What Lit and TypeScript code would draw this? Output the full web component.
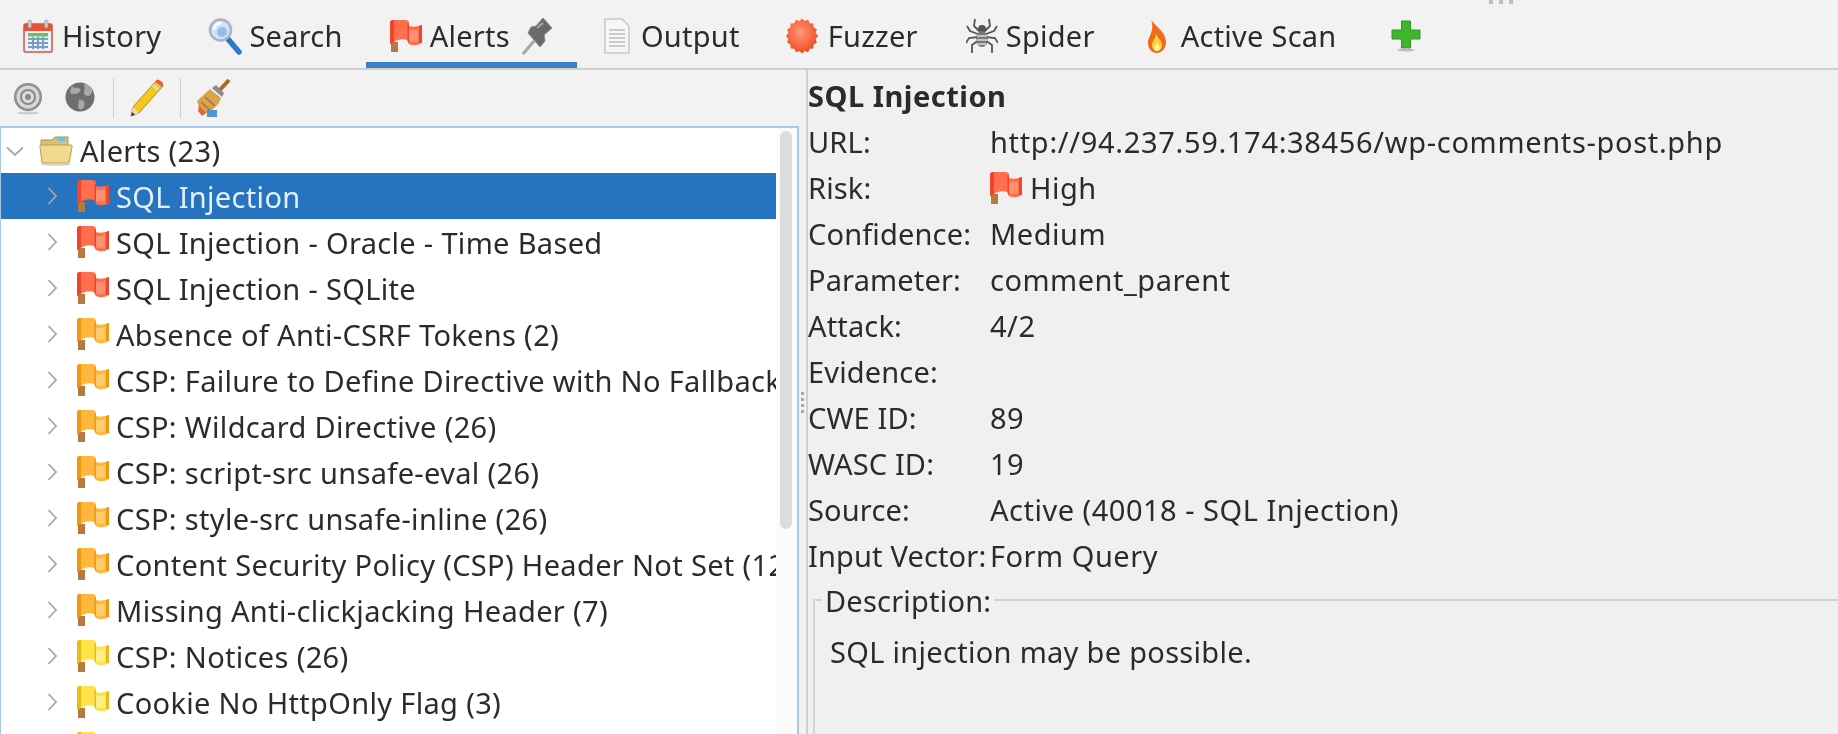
import { LitElement, css, html, svg } from 'lit';
import { customElement } from 'lit/decorators.js';

const RED = ['#ff6f4e', '#f0452a', '#ff9a80'];
const ORANGE = ['#ffb63c', '#f2980f', '#ffd57c'];
const YELLOW = ['#ffe24a', '#e6bd10', '#fff09a'];

// the ZAP flag, a short pole and a blocky two part cloth
const flag = (c: string[], size = 32) =>
  html`<svg class="ico" width=${size} height=${size} viewBox="0 0 32 32">
    <rect x="1" y="22" width="7" height="10" fill="#b47a42" />
    <path d="M0 3 Q0 0 3 0 H15 Q19 0 19 3 V6 Q24 8 32 5 V23 Q25 27 19 24 L17 20 C12 18 6 20 0 24 Z" fill=${c[0]} />
    <path d="M0 3 Q0 0 3 0 H4 V22 L0 24 Z" fill=${c[1]} />
    <path d="M19 10 Q24 11 28 9 V21 Q24 23 19 21 Z" fill=${c[2]} opacity="0.75" />
    <path d="M17.500 3 V20 L19 24 V4 Z M29 6 V23 L32 23 V5 Z" fill=${c[1]} />
  </svg>`;

const calendar = html`<svg class="ico" width="30" height="34" viewBox="0 0 30 34">
  <rect x="1" y="5" width="28" height="28" rx="1.500" fill="#eaf2fa" stroke="#d8523c" stroke-width="1.500" />
  <rect x="1" y="5" width="28" height="7" fill="#e8503a" />
  <rect x="5" y="1" width="3.500" height="8" rx="1.500" fill="#c9c9c9" stroke="#888" stroke-width=".5" />
  <rect x="21.500" y="1" width="3.500" height="8" rx="1.500" fill="#c9c9c9" stroke="#888" stroke-width=".5" />
  <rect x="5" y="14" width="20" height="3.500" fill="#6fc05a" />
  <path d="M5 20h20M5 24h20M5 28h20M10 18v12M15 18v12M20 18v12" stroke="#7d9dc4" stroke-width="2" />
</svg>`;

const magnifier = html`<svg class="ico" width="34" height="38" viewBox="0 0 34 38">
  <path d="M20 22 L31 35" stroke="#2f78c2" stroke-width="5.500" stroke-linecap="round" />
  <circle cx="12.500" cy="13" r="10.500" fill="#cfe4f8" stroke="#a9b4bf" stroke-width="2.500" />
  <path d="M6 13a7 7 0 0 1 7-7" stroke="#fff" stroke-width="2.500" fill="none" />
  <circle cx="14" cy="15" r="5" fill="#8fbdec" />
</svg>`;

const pin = html`<svg class="ico" width="32" height="38" viewBox="0 0 32 38">
  <path d="M1 37 L12 24" stroke="#a8a8a8" stroke-width="3" />
  <path d="M6 16 L18 30 L23 24 L22 18 L30 11 L21 1 L14 9 L9 10 Z" fill="#6a6a6a" stroke="#8a8a8a" />
  <path d="M15 11 L21 6" stroke="#aaa" stroke-width="2" />
</svg>`;

const page = html`<svg class="ico" width="26" height="36" viewBox="0 0 26 36">
  <path d="M1 1 H18 L25 8 V35 H1 Z" fill="#f7f7f7" stroke="#c8c8c8" stroke-width="1.500" />
  <path d="M5 12h16M5 16h16M5 20h16M5 24h16M5 28h16" stroke="#bcbcbc" stroke-width="1.500" />
</svg>`;

const burst = (() => {
  const pts: string[] = [];
  for (let i = 0; i < 32; i++) {
    const r = i % 2 ? 14 : 16;
    const a = (i / 32) * Math.PI * 2;
    pts.push(`${(16 + r * Math.cos(a)).toFixed(1)},${(18 + r * 1.100 * Math.sin(a)).toFixed(1)}`);
  }
  return html`<svg class="ico" width="32" height="36" viewBox="0 0 32 36">
    <defs><radialGradient id="bst" cx=".45" cy=".4" r=".6">
      <stop offset="0" stop-color="#ff9a78" /><stop offset="1" stop-color="#f04a22" />
    </radialGradient></defs>
    <polygon points=${pts.join(' ')} fill="url(#bst)" />
  </svg>`;
})();

const spider = html`<svg class="ico" width="32" height="38" viewBox="0 0 32 38">
  <g stroke="#555" stroke-width="1.800" fill="none">
    <path d="M13 14 L8 9 L9 2 M19 14 L24 9 L23 2" />
    <path d="M12 17 L4 14 L1 9 M20 17 L28 14 L31 9" />
    <path d="M12 20 L3 21 L0 26 M20 20 L29 21 L32 26" />
    <path d="M13 23 L6 28 L6 36 M19 23 L26 28 L26 36" />
  </g>
  <ellipse cx="16" cy="12" rx="4" ry="4" fill="#555" />
  <ellipse cx="16" cy="22" rx="6" ry="8" fill="#777" />
  <path d="M11 19h10M10.500 23h11M12 27h8" stroke="#ddd" stroke-width="1.300" />
</svg>`;

const flame = html`<svg class="ico" width="22" height="36" viewBox="0 0 22 36">
  <path d="M5 1 C7 7 20 13 20 24 C20 31 15 35 11 35 C6 35 2 31 2 25 C2 18 9 14 5 1 Z" fill="#ef6a1e" />
  <path d="M10 15 C11 20 16 22 16 27 C16 31 13 33 11 33 C8 33 6 30 6 27 C6 23 10 20 10 15 Z" fill="#ffd23c" />
  <path d="M11 25 C12 27 13.500 28 13.500 30 C13.500 32 12 33 11 33 C9.500 33 8.500 31.500 8.500 30 C8.500 28 10.500 27 11 25Z" fill="#fff3c0" />
</svg>`;

const plus = html`<svg class="ico" width="30" height="32" viewBox="0 0 30 32">
  <path d="M10.500 1 H19.500 V10 H29 V19 H19.500 V28 H10.500 V19 H1 V10 H10.500 Z" fill="#3fb52c" stroke="#2f9a20" />
  <ellipse cx="15" cy="30" rx="9" ry="1.500" fill="#bbb" />
</svg>`;

const target = html`<svg class="ico" width="30" height="36" viewBox="0 0 30 36">
  <circle cx="15" cy="17" r="14" fill="#8e8e8e" />
  <circle cx="15" cy="17" r="11.500" fill="#d6d6d6" />
  <circle cx="15" cy="17" r="8" fill="#8a8a8a" />
  <circle cx="15" cy="17" r="6" fill="#dcdcdc" />
  <circle cx="15" cy="17" r="3" fill="#888" />
  <ellipse cx="15" cy="33" rx="11" ry="1.500" fill="#ccc" />
</svg>`;

const globe = html`<svg class="ico" width="30" height="36" viewBox="0 0 30 36">
  <circle cx="15" cy="17" r="14.500" fill="#6e6e6e" />
  <path d="M7 6 C10 10 12 6 15 9 C17 12 11 14 9 14 C5 15 4 11 7 6Z M18 3 C22 8 17 12 20 15 C24 18 28 14 27 9 C25 6 22 4 18 3Z M14 20 C18 19 21 22 19 27 C17 31 13 30 13 26Z" fill="#a8a8a8" />
</svg>`;

const pencil = html`<svg class="ico" width="36" height="40" viewBox="0 0 36 40">
  <path d="M27 3 L33 9 L10 35 L2 38 L4 29 Z" fill="#f6c81c" stroke="#b98a10" stroke-width="1" />
  <path d="M24 7 L29 12" stroke="#d9d9d9" stroke-width="3" />
  <path d="M26 3.500 L28 1.500 Q31 1 34 5 Q35 7 33.500 9 Z" fill="#e2604c" />
  <path d="M4 29 L10 35 L2 38 Z" fill="#f0d8b0" />
  <path d="M2 38 L3 34 L6 37Z" fill="#333" />
</svg>`;

const broom = html`<svg class="ico" width="36" height="42" viewBox="0 0 36 42">
  <path d="M22 15 L33 3" stroke="#a66a2c" stroke-width="4" />
  <path d="M14 12 L25 21 C23 29 15 34 7 38 L3 30 L1 24 C5 20 10 16 14 12 Z" fill="#d9a24e" />
  <path d="M5 25 L14 33 M9 20 L19 29" stroke="#a87428" stroke-width="1.500" />
  <path d="M16 11 L26 20 L28 16 L20 8 Z" fill="#8a8a8a" />
  <path d="M3 28 L10 36 L6 39 L2 34Z" fill="#e8653c" />
  <rect x="11" y="33" width="10" height="7" fill="#4f93d8" />
</svg>`;

const folder = html`<svg class="ico" width="34" height="30" viewBox="0 0 34 30">
  <path d="M2 4 H13 L16 1 H29 V10 H2 Z" fill="#d8c07a" stroke="#a89050" stroke-width="1" />
  <rect x="18" y="2" width="8" height="3" fill="#5ac8f0" />
  <path d="M1 9 H32 Q33.500 9 33 11 L30 27 H3 L1 11 Z" fill="#f3d98e" stroke="#b89c58" stroke-width="1" />
  <ellipse cx="17" cy="28.500" rx="15" ry="1.200" fill="#ccc" />
</svg>`;

const chevron = (open: boolean) =>
  open
    ? svg`<path d="M1 1.500 L9 9 L17 1.500" fill="none" stroke="#a8a8a8" stroke-width="1.800" />`
    : svg`<path d="M1.500 1 L9 9 L1.500 17" fill="none" stroke="#a8a8a8" stroke-width="1.800" />`;

const alerts: [string, string[]][] = [
  ['SQL Injection', RED],
  ['SQL Injection - Oracle - Time Based', RED],
  ['SQL Injection - SQLite', RED],
  ['Absence of Anti-CSRF Tokens (2)', ORANGE],
  ['CSP: Failure to Define Directive with No Fallback', ORANGE],
  ['CSP: Wildcard Directive (26)', ORANGE],
  ['CSP: script-src unsafe-eval (26)', ORANGE],
  ['CSP: style-src unsafe-inline (26)', ORANGE],
  ['Content Security Policy (CSP) Header Not Set (12)', ORANGE],
  ['Missing Anti-clickjacking Header (7)', ORANGE],
  ['CSP: Notices (26)', YELLOW],
  ['Cookie No HttpOnly Flag (3)', YELLOW],
  ['', YELLOW],
];

const details: [string, string][] = [
  ['URL:', 'http://94.237.59.174:38456/wp-comments-post.php'],
  ['Risk:', 'High'],
  ['Confidence:', 'Medium'],
  ['Parameter:', 'comment_parent'],
  ['Attack:', '4/2'],
  ['Evidence:', ''],
  ['CWE ID:', '89'],
  ['WASC ID:', '19'],
  ['Source:', 'Active (40018 - SQL Injection)'],
  ['Input Vector:', 'Form Query'],
];

@customElement('app-root')
export class AppRoot extends LitElement {
  static styles = css`
    :host {
      display: block;
      width: 1838px;
      height: 734px;
      overflow: hidden;
      background: #f2f2f2;
      color: #2b2b2b;
      font-family: 'Noto Sans', sans-serif;
      font-size: 29px;
      letter-spacing: 0.5px;
      line-height: 46px;
      filter: blur(0.5px);
    }
    .ico {
      display: block;
      flex: none;
    }
    .tabs {
      display: flex;
      align-items: center;
      height: 70px;
      padding-left: 23px;
      box-sizing: border-box;
      border-bottom: 2px solid #cfcfcf;
      position: relative;
      letter-spacing: 0.25px;
    }
    .tab {
      display: flex;
      align-items: center;
      height: 68px;
      box-sizing: border-box;
      padding-top: 4px;
    }
    .tab.active {
      padding: 4px 23px 0 24px;
      box-shadow: inset 0 -6px 0 #3b80c4;
    }
    .grip {
      position: absolute;
      top: 0;
      left: 1489px;
      display: flex;
      gap: 6px;
    }
    .grip i {
      width: 4px;
      height: 4px;
      background: #bdbdbd;
    }
    .main {
      display: flex;
      height: 664px;
    }
    .left {
      width: 799px;
      flex: none;
      display: flex;
      flex-direction: column;
    }
    .toolbar {
      display: flex;
      align-items: center;
      height: 56px;
      padding-left: 13px;
      flex: none;
    }
    .sep {
      width: 1px;
      height: 40px;
      background: #cfcfcf;
      flex: none;
    }
    .tree {
      flex: 1;
      display: flex;
      background: #fff;
      border: 2px solid #a9c8e6;
      border-left-width: 1px;
      border-bottom: 0;
      min-height: 0;
      overflow: hidden;
    }
    .rows {
      width: 775px;
      flex: none;
      overflow: hidden;
      letter-spacing: 0.33px;
    }
    .row {
      display: flex;
      align-items: center;
      height: 46px;
      white-space: nowrap;
      overflow: hidden;
    }
    .row.root {
      height: 45px;
    }
    .row .label {
      margin: 2px 0 0 7px;
    }
    .row.sel {
      background: #2673bf;
      color: #e4f0fb;
    }
    .scroll {
      flex: 1;
      background: #fbfbfb;
      padding: 3px 5px 0 4px;
    }
    .thumb {
      height: 398px;
      background: #dcdcdc;
      border-radius: 6px;
    }
    .split {
      width: 7px;
      flex: none;
      display: flex;
      flex-direction: column;
      align-items: center;
      justify-content: center;
      gap: 3px;
      border-right: 2px solid #cfcfcf;
      box-sizing: content-box;
    }
    .split i {
      width: 3px;
      height: 3px;
      background: #a8a8a8;
    }
    .right {
      flex: 1;
      background: #f0f0f0;
      min-width: 0;
    }
    .title {
      font-weight: 700;
      height: 46px;
      margin-top: 3px;
    }
    .detail {
      display: grid;
      grid-template-columns: 182px 1fr;
    }
    .key {
      height: 46px;
      white-space: nowrap;
      letter-spacing: 0.15px;
    }
    .val {
      display: flex;
      align-items: center;
      gap: 8px;
      height: 46px;
      white-space: nowrap;
    }
    .val.url {
      letter-spacing: 0.67px;
    }
    .desc {
      margin: 20px 0 0 5px;
      border: 2px solid #d4d4d4;
      border-bottom: 0;
      border-right: 0;
      height: 200px;
      position: relative;
    }
    .desc b {
      position: absolute;
      top: -23px;
      left: 7px;
      padding: 0 3px;
      background: #f0f0f0;
      font-weight: 400;
      letter-spacing: 0.2px;
    }
    .desc p {
      margin: 28px 0 0 15px;
      letter-spacing: 0.3px;
    }
  `;

  renderRow(label: string, color: string[], selected: boolean) {
    return html`<div class="row ${selected ? 'sel' : ''}">
      <svg class="ico" style="margin:0 20px 0 46px" width="10" height="18" viewBox="0 0 10 18">${chevron(false)}</svg>
      ${flag(color)}
      <span class="label">${label}</span>
    </div>`;
  }

  render() {
    return html`
      <div class="tabs">
        <div class="tab">${calendar}<span style="margin:0 47px 0 9px">History</span></div>
        <div class="tab">${magnifier}<span style="margin:0 23px 0 7px">Search</span></div>
        <div class="tab active">
          ${flag(RED)}<span style="margin:0 12px 0 8px">Alerts</span>${pin}
        </div>
        <div class="tab" style="margin-left:27px">${page}<span style="margin:0 46px 0 11px">Output</span></div>
        <div class="tab">${burst}<span style="margin:0 48px 0 10px">Fuzzer</span></div>
        <div class="tab">${spider}<span style="margin:0 51px 0 8px">Spider</span></div>
        <div class="tab">${flame}<span style="margin:0 54px 0 13px">Active Scan</span></div>
        <div class="tab">${plus}</div>
        <div class="grip"><i></i><i></i><i></i></div>
      </div>
      <div class="main">
        <div class="left">
          <div class="toolbar">
            ${target}
            <span style="width:22px"></span>
            ${globe}
            <span style="width:18px"></span>
            <div class="sep"></div>
            <span style="width:15px"></span>
            ${pencil}
            <span style="width:15px"></span>
            <div class="sep"></div>
            <span style="width:15px"></span>
            ${broom}
          </div>
          <div class="tree">
            <div class="rows">
              <div class="row root">
                <svg class="ico" style="margin:0 15px 0 5px" width="18" height="10" viewBox="0 0 18 10">${chevron(true)}</svg>
                ${folder}
                <span style="margin-left:7px">Alerts (23)</span>
              </div>
              ${alerts.map(([label, color], i) => this.renderRow(label, color, i === 0))}
            </div>
            <div class="scroll"><div class="thumb"></div></div>
          </div>
        </div>
        <div class="split"><i></i><i></i><i></i><i></i></div>
        <div class="right">
          <div class="title">SQL Injection</div>
          <div class="detail">
            ${details.map(
              ([k, v]) => html`<div class="key">${k}</div>
                <div class="val ${k === 'URL:' ? 'url' : ''}">${k === 'Risk:' ? flag(RED) : ''}<span>${v}</span></div>`,
            )}
          </div>
          <div class="desc">
            <b>Description:</b>
            <p>SQL injection may be possible.</p>
          </div>
        </div>
      </div>
    `;
  }
}
